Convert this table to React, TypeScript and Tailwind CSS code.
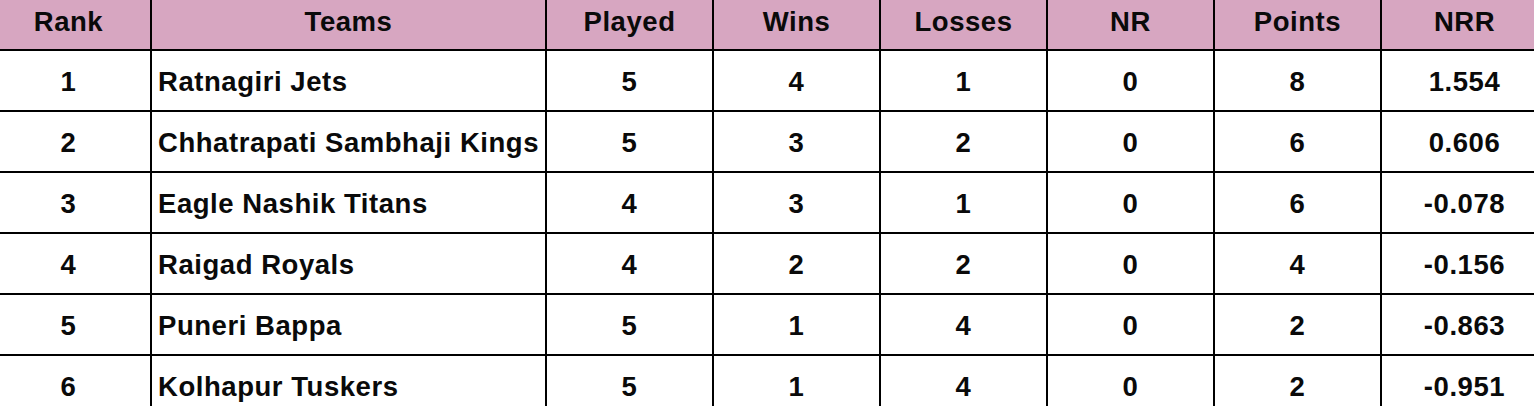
import React from "react";

const headers = ["Rank", "Teams", "Played", "Wins", "Losses", "NR", "Points", "NRR"];
const rows: (string | number)[][] = [
  [1, "Ratnagiri Jets", 5, 4, 1, 0, 8, "1.554"],
  [2, "Chhatrapati Sambhaji Kings", 5, 3, 2, 0, 6, "0.606"],
  [3, "Eagle Nashik Titans", 4, 3, 1, 0, 6, "-0.078"],
  [4, "Raigad Royals", 4, 2, 2, 0, 4, "-0.156"],
  [5, "Puneri Bappa", 5, 1, 4, 0, 2, "-0.863"],
  [6, "Kolhapur Tuskers", 5, 1, 4, 0, 2, "-0.951"],
];

const gridCols = "grid grid-cols-[165px_395px_167px_167px_167px_167px_167px_167px]";

export default function App() {
  return (
    <div
      className="w-[1534px] h-[406px] overflow-hidden bg-white text-[#0a0a0a] font-bold"
      style={{ fontFamily: '"Liberation Sans", Arial, sans-serif' }}
    >
      <div className="ml-[-13px] w-[1562px]">
        <div className={`${gridCols} h-[51px] bg-[#d7a6c1] border-b-2 border-black`}>
          {headers.map((h) => (
            <div
              key={h}
              className="border-r-2 border-black flex items-center justify-center pb-[6px] text-[27.5px] tracking-[0.02em]"
            >
              {h}
            </div>
          ))}
        </div>
        {rows.map((r, ri) => (
          <div key={ri} className={`${gridCols} h-[61px] border-b-2 border-black`}>
            {r.map((c, ci) => (
              <div
                key={ci}
                className={`border-r-2 border-black flex items-center pt-[2px] text-[27.5px] tracking-[0.02em] ${
                  ci === 1 ? "justify-start pl-[6px]" : "justify-center"
                }`}
              >
                {c}
              </div>
            ))}
          </div>
        ))}
      </div>
    </div>
  );
}
